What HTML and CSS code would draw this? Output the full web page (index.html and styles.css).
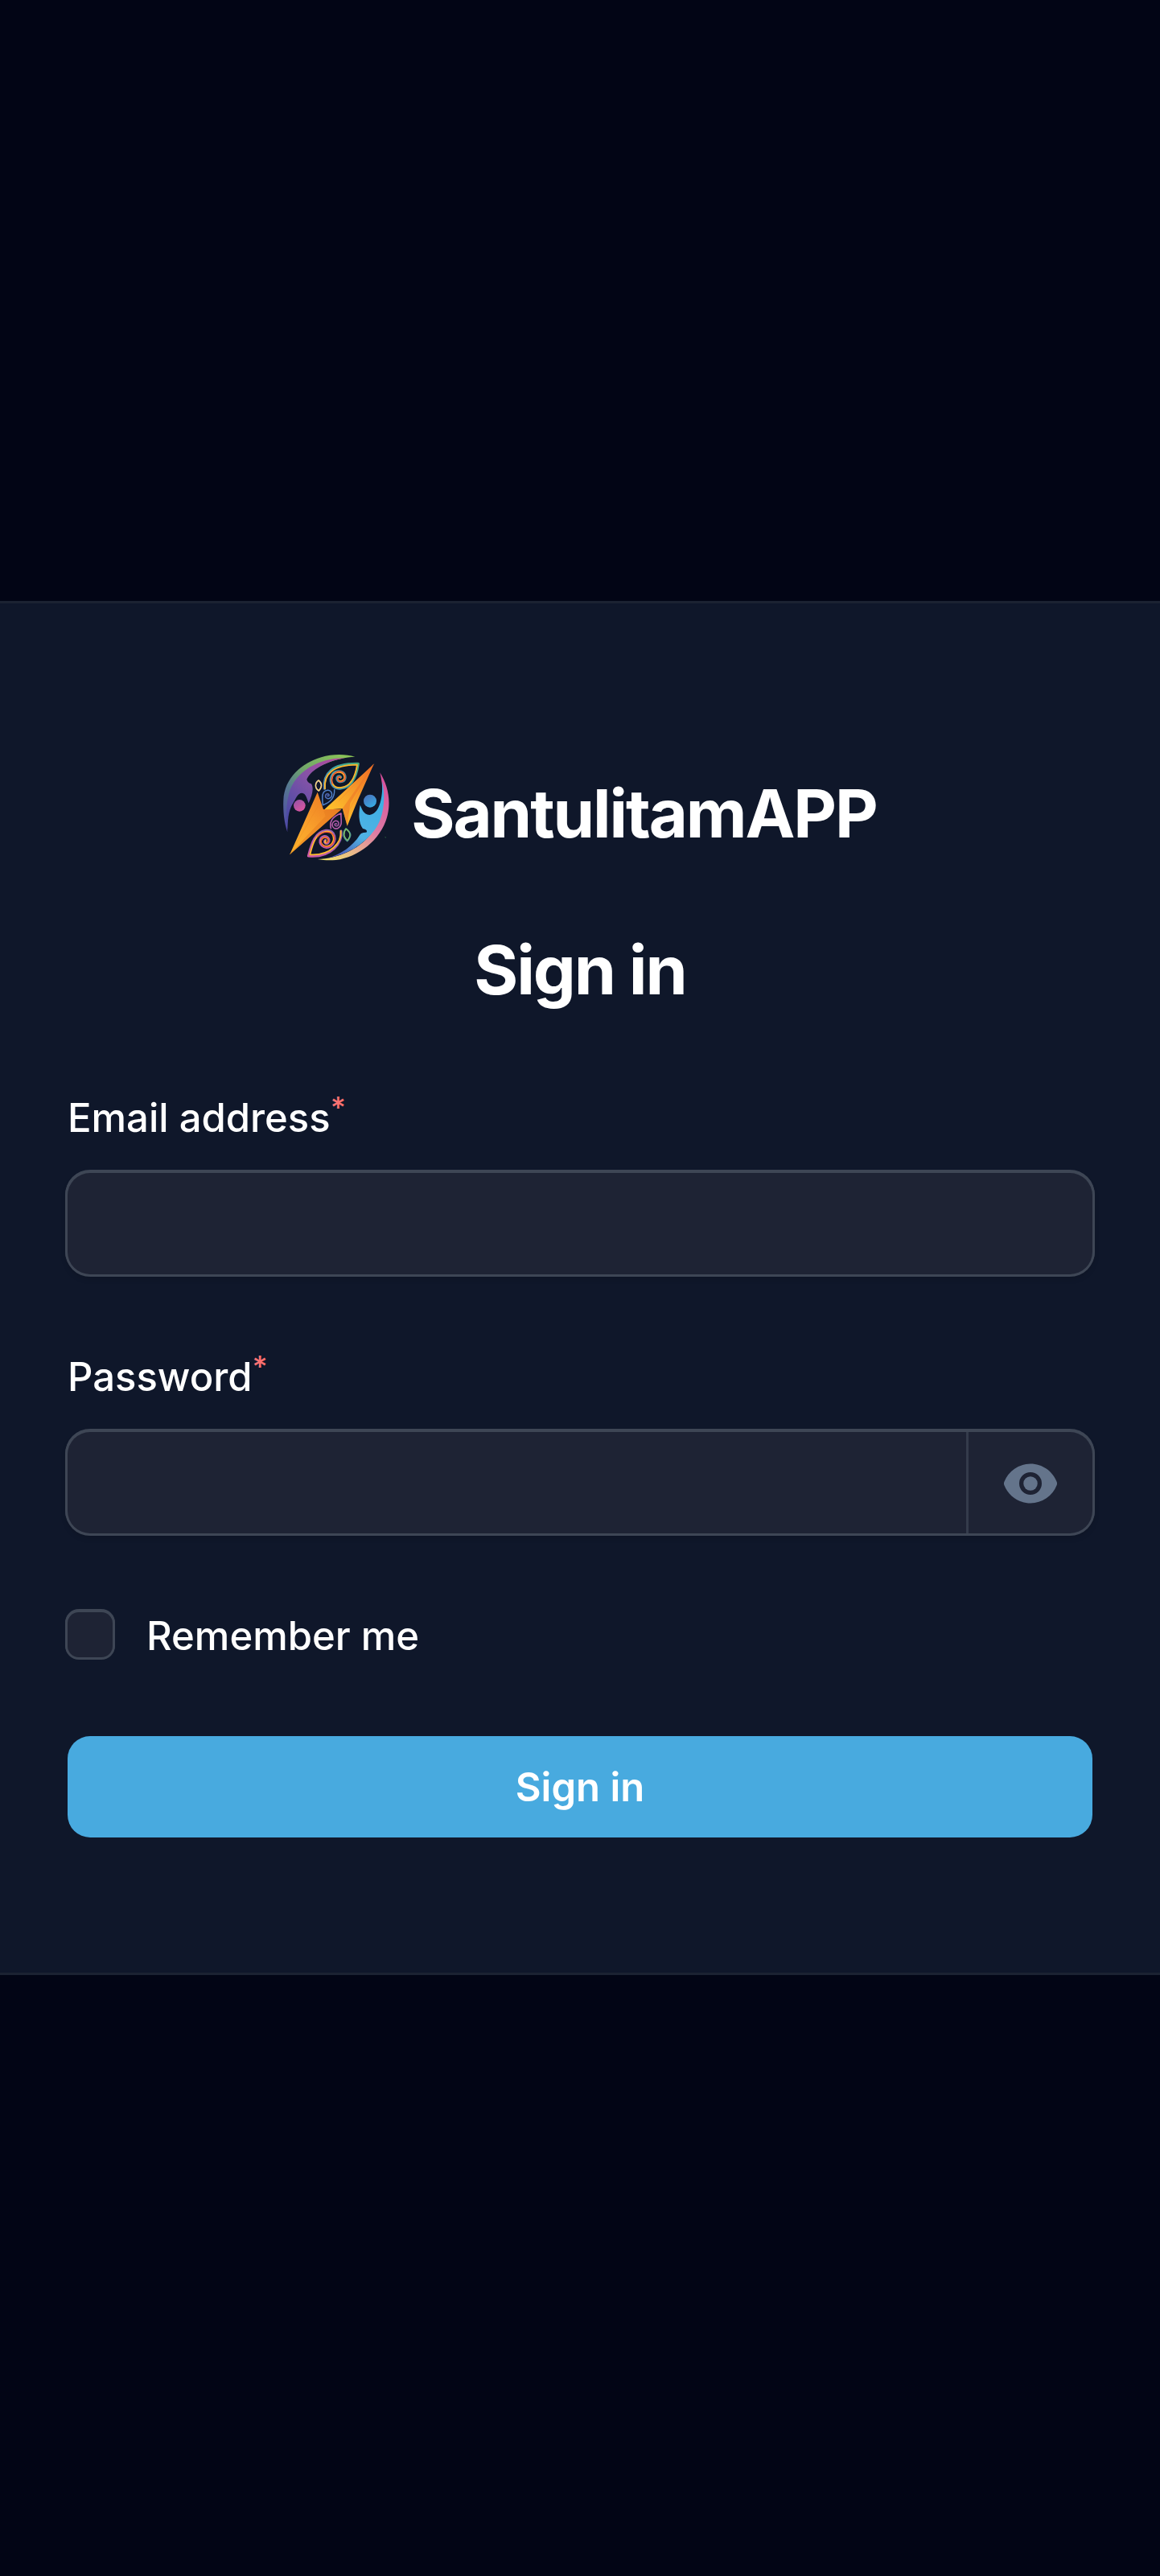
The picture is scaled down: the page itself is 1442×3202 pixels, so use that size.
FILE: index.html
```html
<!DOCTYPE html>
<html lang="en">
<head>
<meta charset="utf-8">
<title>Sign in - SantulitamAPP</title>
<link rel="stylesheet" href="styles.css">
</head>
<body>
<main class="card">
  <header class="header">
    <div class="brand">
      <svg class="brand-logo" viewBox="42 38 396 396" fill="none" aria-hidden="true">
        <defs>
          <linearGradient id="rimLeft" x1="300" y1="45" x2="55" y2="320" gradientUnits="userSpaceOnUse"><stop offset="0" stop-color="#8cc655"/><stop offset=".4" stop-color="#73a968"/><stop offset=".65" stop-color="#567a91"/><stop offset="1" stop-color="#5047a8"/></linearGradient>
          <linearGradient id="bodyLeft" x1="270" y1="55" x2="60" y2="260" gradientUnits="userSpaceOnUse"><stop offset="0" stop-color="#b9499c"/><stop offset=".5" stop-color="#8553a7"/><stop offset="1" stop-color="#4d4ba5"/></linearGradient>
          <linearGradient id="rimRight" x1="410" y1="110" x2="190" y2="430" gradientUnits="userSpaceOnUse"><stop offset="0" stop-color="#d94d9b"/><stop offset=".5" stop-color="#dc7ca4"/><stop offset=".75" stop-color="#e8b28d"/><stop offset="1" stop-color="#f0e36b"/></linearGradient>
          <linearGradient id="bodyRight" x1="410" y1="150" x2="240" y2="420" gradientUnits="userSpaceOnUse"><stop offset="0" stop-color="#36aee4"/><stop offset=".65" stop-color="#51b3e4"/><stop offset="1" stop-color="#4a51b2"/></linearGradient>
          <linearGradient id="headLeft" x1="85" y1="210" x2="115" y2="250" gradientUnits="userSpaceOnUse"><stop stop-color="#9852a6"/><stop offset="1" stop-color="#df56a0"/></linearGradient>
          <linearGradient id="headRight" x1="350" y1="188" x2="380" y2="235" gradientUnits="userSpaceOnUse"><stop stop-color="#4a72bd"/><stop offset="1" stop-color="#36aee4"/></linearGradient>
          <linearGradient id="boltTop" x1="380" y1="75" x2="200" y2="240" gradientUnits="userSpaceOnUse"><stop stop-color="#ee6a25"/><stop offset=".5" stop-color="#f69b2a"/><stop offset="1" stop-color="#fec32c"/></linearGradient>
          <linearGradient id="boltBottom" x1="230" y1="230" x2="70" y2="408" gradientUnits="userSpaceOnUse"><stop stop-color="#ee8125"/><stop offset=".5" stop-color="#f9a02b"/><stop offset="1" stop-color="#fdb52b"/></linearGradient>
          <linearGradient id="leafTop" x1="320" y1="72" x2="200" y2="165" gradientUnits="userSpaceOnUse"><stop stop-color="#4aae7c"/><stop offset=".55" stop-color="#3a9fa5"/><stop offset="1" stop-color="#4b86bd"/></linearGradient>
          <linearGradient id="leafBottom" x1="250" y1="320" x2="136" y2="416" gradientUnits="userSpaceOnUse"><stop stop-color="#8d5fb5"/><stop offset="1" stop-color="#d35aa5"/></linearGradient>
        </defs>
        <path fill="url(#rimLeft)" d="M310 46C275 36 226 35 184 48C111 70 47 125 43 208C41 255 47 296 58 327C54 265 70 180 116 128C162 78 240 50 310 46Z"/>
        <path fill="url(#bodyLeft)" d="M272 51C177 50 85 100 63 186C52 229 52 275 58 318C59 270 65 241 79 219C89 203 96 181 112 181C127 182 131 203 137 219C149 192 158 164 147 147C137 143 132 139 130 130C138 113 150 101 170 88C198 70 232 58 272 51Z"/>
        <circle fill="url(#headLeft)" cx="103" cy="228" r="22"/>
        <path fill="url(#rimRight)" d="M403 105C431 150 444 204 432 260C413 350 327 420 239 431C214 433 192 432 171 428C246 425 321 393 366 338C412 283 423 185 403 105Z"/>
        <path fill="url(#bodyRight)" d="M411 137C425 198 418 271 384 318C343 374 281 412 207 424C256 411 302 378 326 340C333 328 341 329 352 328C358 321 350 316 339 314C323 293 323 256 329 226C336 240 341 261 364 263C403 260 415 190 411 137Z"/>
        <circle fill="url(#headRight)" cx="366" cy="211" r="24"/>
        <g stroke-linecap="round" stroke-linejoin="round">
          <path stroke="url(#leafTop)" stroke-width="9" d="M196 165C190 109 224 70 322 72C313 135 291 161 258 164C229 168 213 144 222 119C230 96 266 93 273 117C279 139 249 147 243 131C240 120 251 114 257 122"/>
          <path stroke="#fdb52b" stroke-width="5.5" d="M198 165C193 113 225 76 318 76C309 132 290 158 258 161C232 164 218 144 225 121C233 99 263 97 270 117C276 136 250 144 246 131C244 123 251 118 256 124"/>
          <path stroke="#ef4c35" stroke-width="4" d="M225 146C215 107 256 86 271 111C282 137 251 148 245 132C242 121 251 116 257 123"/>
          <path stroke="#536bb9" stroke-width="4.5" d="M233 169C235 202 216 217 190 226C188 201 183 174 207 171C229 169 229 203 209 202C194 199 199 181 210 185C218 189 210 196 207 191"/>
          <path stroke="#46a2d6" stroke-width="1.5" d="M233 169C235 202 216 217 190 226C188 201 183 174 207 171C229 169 229 203 209 202"/>
          <path stroke="#dc86a8" stroke-width="5" d="M174 134C159 145 160 163 175 173C188 158 188 145 174 134Z"/>
          <path stroke="#efe678" stroke-width="3.5" d="M174 134C159 145 160 163 175 173C188 158 188 145 174 134Z"/>
          <path stroke="url(#leafBottom)" stroke-width="9" d="M258 323C264 366 222 424 136 416C149 365 162 327 201 321C237 316 245 361 219 380C195 394 170 370 183 350C197 332 222 351 210 366C202 374 191 363 200 357"/>
          <path stroke="#fdba2e" stroke-width="5.5" d="M257 323C261 365 220 416 142 411C153 366 165 331 201 325C231 321 240 358 217 376C196 388 176 369 186 353C198 338 218 352 208 364C202 370 194 364 200 359"/>
          <path stroke="#ef5038" stroke-width="4" d="M170 345C187 321 226 321 233 347C235 370 215 387 195 380C176 370 183 346 199 346C214 347 214 365 204 367"/>
          <path stroke="#aa58a8" stroke-width="4.5" d="M220 313C213 286 226 269 258 257C256 280 266 302 246 313C225 320 217 293 236 285C253 284 253 306 239 304C229 300 238 291 242 297"/>
          <path stroke="#d66bb0" stroke-width="1.5" d="M220 313C213 286 226 269 258 257C256 280 266 302 246 313C225 320 217 293 236 285"/>
          <path stroke="#4a8f9d" stroke-width="6" d="M276 314C262 332 267 347 281 360C298 341 296 329 276 314Z"/>
          <path stroke="#86c25a" stroke-width="3.5" d="M276 315C264 332 269 346 281 358C296 341 294 329 276 315Z"/>
        </g>
        <path fill="url(#boltTop)" d="M380 73L193 245L263 239L281 304L320 208Z"/>
        <path fill="#ec7427" opacity=".55" d="M380 73L263 239L281 304L292 219Z"/>
        <path stroke="#f57a28" d="M380 73L250 211M380 73L280 260"/>
        <path fill="url(#boltBottom)" d="M67 410L170 178L192 242L260 241Z"/>
        <path fill="#e57b1f" opacity=".5" d="M67 410L200 268L193 245L260 241Z"/>
        <path stroke="#e98622" d="M67 410L172 230M67 410L200 268"/>
        <path stroke="#3d8b4f" stroke-width="3" d="M422 346L425 347"/>
      </svg>
      <span class="brand-name">SantulitamAPP</span>
    </div>
    <h1 class="title">Sign in</h1>
  </header>
  <form class="form">
    <div class="field">
      <label class="label" for="email">Email address<span class="required">*</span></label>
      <div class="control"><input class="input" id="email" type="email"></div>
    </div>
    <div class="field">
      <label class="label" for="password">Password<span class="required">*</span></label>
      <div class="control">
        <input class="input" id="password" type="password">
        <button class="reveal" type="button" aria-label="Show password">
          <svg class="eye" viewBox="0 0 20 20" fill="currentColor"><path d="M10 12.5a2.5 2.5 0 1 0 0-5 2.5 2.5 0 0 0 0 5Z"/><path fill-rule="evenodd" clip-rule="evenodd" d="M.664 10.59a1.651 1.651 0 0 1 0-1.186A10.004 10.004 0 0 1 10 3c4.257 0 7.893 2.66 9.336 6.41.147.381.146.804 0 1.186A10.004 10.004 0 0 1 10 17c-4.257 0-7.893-2.66-9.336-6.41ZM14 10a4 4 0 1 1-8 0 4 4 0 0 1 8 0Z"/></svg>
        </button>
      </div>
    </div>
    <label class="remember"><input class="checkbox" type="checkbox"><span class="remember-text">Remember me</span></label>
    <button class="submit" type="button">Sign in</button>
  </form>
</main>
</body>
</html>
```
FILE: styles.css
```css
* { box-sizing: border-box; }

body {
  margin: 0;
  min-height: 3202px;
  padding-top: 750px;
  background: #020617;
  background: #020515;
  color: #fff;
  font-family: Inter, "Liberation Sans", sans-serif;
  font-size: 49px;
  font-weight: 500;
  line-height: 84px;
}

.card {
  height: 1702px;
  padding: 188px 84px 0;
  background: #0f172a;
  box-shadow: 0 0 0 3px #1b2232;
}

.header {
  display: flex;
  flex-direction: column;
  align-items: center;
}

.brand {
  display: flex;
  align-items: flex-start;
  gap: 27px;
  height: 132px;
}

.brand-logo {
  width: 132px;
  height: 132px;
}

.brand-name {
  margin-top: 31px;
  font-size: 83px;
  font-weight: 700;
  letter-spacing: -0.025em;
}

.title {
  margin: 94px 0 0;
  font-size: 84px;
  font-weight: 700;
  line-height: 84px;
  letter-spacing: -0.025em;
}

.form {
  display: flex;
  flex-direction: column;
  margin-top: 98px;
}

.field {
  display: flex;
  flex-direction: column;
  gap: 28px;
  margin-bottom: 84px;
}

.label {
  display: flex;
  height: 84px;
  line-height: 88px;
}

.required {
  color: #f87171;
  font-size: 36.75px;
  line-height: 62px;
}

.control {
  display: flex;
  height: 126px;
  border-radius: 28px;
  background: #1e2334;
  box-shadow: 0 0 0 3px #3e4655, 0 -1px 0 3px #3e4655, 0 4px 7px 2px rgba(0, 0, 0, 0.12);
}

.input {
  flex: 1;
  min-width: 0;
  padding: 0 42px;
  border: 0;
  background: none;
  color: inherit;
  font: inherit;
}

.reveal {
  display: flex;
  align-items: center;
  justify-content: center;
  width: 157px;
  padding: 2px 0 0;
  border: 0;
  border-left: 3px solid #343b4b;
  background: none;
  color: #64748b;
}

.eye {
  width: 70px;
  height: 70px;
}

.remember {
  display: flex;
  align-items: center;
  gap: 42px;
  height: 84px;
}

.remember-text {
  padding-top: 3px;
}

.checkbox {
  appearance: none;
  width: 56px;
  height: 56px;
  margin: 0;
  border-radius: 14px;
  background: #1e2334;
  box-shadow: 0 0 0 3px #3e4655, 0 -1px 0 3px #3e4655;
}

.submit {
  height: 126px;
  margin-top: 84px;
  padding: 2px 0 0;
  border: 0;
  border-radius: 28px;
  background: #48aadf;
  color: #fff;
  font: inherit;
  font-weight: 600;
}
```
